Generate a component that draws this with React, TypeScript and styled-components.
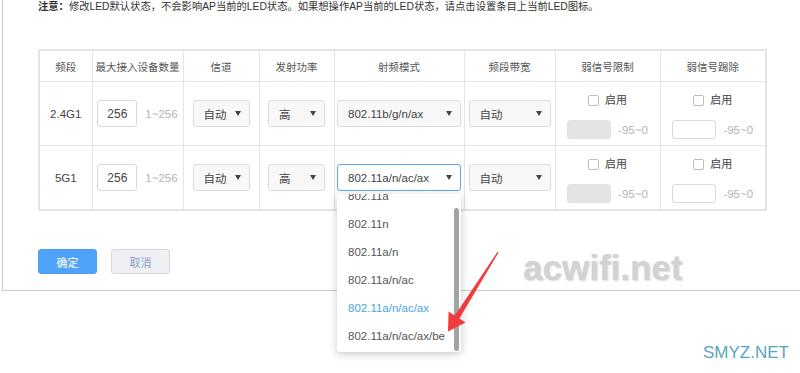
import React from 'react';
import styled, { createGlobalStyle } from 'styled-components';

const GlobalStyle = createGlobalStyle`
  html, body {
    margin: 0;
    padding: 0;
    background: #fff;
  }
  body {
    font-family: "Liberation Sans", "Noto Sans CJK SC", sans-serif;
    color: #444;
    overflow: hidden;
  }
`;

const Page = styled.div`
  position: relative;
  width: 800px;
  height: 373px;
  overflow: hidden;
`;

const Panel = styled.section`
  margin-left: 2px;
  border-left: 1px solid #c3cedb;
  border-bottom: 1px solid #c3cedb;
  padding: 0 0 16px 35px;
`;

const Notice = styled.p`
  margin: 0;
  font-size: 10.3px;
  line-height: 13px;
  color: #333;

  b {
    font-weight: 700;
  }
`;

const Grid = styled.table`
  margin-top: 36px;
  width: 727px;
  table-layout: fixed;
  border-collapse: collapse;
  border: 2px solid #e3e3e3;
`;

const HeadCell = styled.th`
  height: 30px;
  padding: 0;
  border: 1px solid #e3e3e3;
  font-size: 10.5px;
  font-weight: 400;
  color: #555;
  text-align: center;
  vertical-align: middle;
`;

const Cell = styled.td`
  height: 63px;
  padding: 0;
  border: 1px solid #e3e3e3;
  font-size: 11.5px;
  color: #444;
  text-align: center;
  vertical-align: middle;
`;

const Inline = styled.div<{ $gap: number }>`
  display: flex;
  align-items: center;
  justify-content: center;
  gap: ${(p) => p.$gap}px;
`;

const NumInput = styled.input`
  width: 40px;
  height: 27px;
  box-sizing: border-box;
  padding: 0;
  border: 1px solid #d9d9d9;
  border-radius: 3px;
  background: #fff;
  font: 12px "Liberation Sans", sans-serif;
  color: #444;
  text-align: center;
  outline: none;
`;

const Hint = styled.span`
  font-size: 11.5px;
  color: #b5b5b5;
`;

const SelectWrap = styled.div<{ $w: number }>`
  position: relative;
  width: ${(p) => p.$w}px;
  margin: 0 auto;
`;

const SelectBox = styled.div<{ $focus?: boolean }>`
  height: 27px;
  box-sizing: border-box;
  display: flex;
  align-items: center;
  justify-content: space-between;
  padding: 0 8px 0 10px;
  border: 1px solid ${(p) => (p.$focus ? '#5aa9ef' : '#dcdcdc')};
  border-radius: 3px;
  background: ${(p) => (p.$focus ? '#fff' : '#f8f8f8')};
  font-size: 11.5px;
  color: #444;
  text-align: left;
`;

const Caret = styled.span`
  width: 0;
  height: 0;
  border-left: 3.5px solid transparent;
  border-right: 3.5px solid transparent;
  border-top: 5px solid #444;
`;

const Menu = styled.div`
  position: absolute;
  top: calc(100% + 3px);
  left: 0;
  width: 100%;
  height: 158px;
  overflow: hidden;
  background: #fff;
  border-radius: 3px;
  box-shadow: 0 2px 8px rgba(0, 0, 0, 0.22);
  z-index: 5;
  text-align: left;
`;

const MenuList = styled.ul<{ $scroll: number }>`
  margin: 0;
  padding: 4px 0;
  list-style: none;
  transform: translateY(-${(p) => p.$scroll}px);
`;

const ScrollThumb = styled.div`
  position: absolute;
  right: 2px;
  top: 14px;
  bottom: 1px;
  width: 5px;
  border-radius: 3px;
  background: #a3a3a3;
`;

const MenuItem = styled.li<{ $active?: boolean }>`
  height: 28px;
  line-height: 28px;
  padding-left: 11px;
  font-size: 11.5px;
  color: ${(p) => (p.$active ? '#45a6e3' : '#555')};
  white-space: nowrap;
`;

const Stack = styled.div`
  display: flex;
  flex-direction: column;
  align-items: center;
  gap: 13px;
  margin-top: 5px;
`;

const CheckLine = styled.label`
  display: flex;
  align-items: center;
  gap: 6px;
  font-size: 11px;
  line-height: 14px;
  color: #444;
`;

const Box = styled.span`
  width: 11px;
  height: 11px;
  box-sizing: border-box;
  border: 1px solid #bdbdbd;
  border-radius: 2px;
  background: #fff;
`;

const SmallInput = styled.input<{ $off?: boolean }>`
  width: 44px;
  height: 19px;
  box-sizing: border-box;
  padding: 0;
  border: 1px solid ${(p) => (p.$off ? '#e2e2e2' : '#d9d9d9')};
  border-radius: 3px;
  background: ${(p) => (p.$off ? '#e4e4e4' : '#fff')};
  outline: none;
`;

const Actions = styled.div`
  display: flex;
  gap: 14px;
  margin-top: 38px;
`;

const Button = styled.button<{ $primary?: boolean }>`
  display: block;
  width: 59px;
  height: 25px;
  padding: 0;
  border-radius: 3px;
  border: 1px solid ${(p) => (p.$primary ? '#4a9ef5' : '#d9d9d9')};
  background: ${(p) => (p.$primary ? '#4fa2f7' : '#eff0f3')};
  color: ${(p) => (p.$primary ? '#fff' : '#8b9cc9')};
  font: 11px "Liberation Sans", "Noto Sans CJK SC", sans-serif;
`;

const Watermark = styled.div`
  position: absolute;
  left: 523px;
  top: 248px;
  font: 700 35px "Liberation Sans", sans-serif;
  color: #d2d2d2;
  text-shadow: 1px 1px 2px rgba(0, 0, 0, 0.16);
  pointer-events: none;
`;

const SiteMark = styled.div`
  position: absolute;
  left: 703px;
  top: 343px;
  font: 17px "Liberation Sans", sans-serif;
  color: #5aa5bd;
`;

const Arrow = styled.svg`
  position: absolute;
  left: 440px;
  top: 245px;
  z-index: 6;
`;

const headers = ['频段', '最大接入设备数量', '信道', '发射功率', '射频模式', '频段带宽', '弱信号限制', '弱信号踢除'];
const widths = [53, 91, 76, 75, 130, 91, 105, 106];
const modes5g = ['802.11a', '802.11n', '802.11a/n', '802.11a/n/ac', '802.11a/n/ac/ax', '802.11a/n/ac/ax/be'];

const rows = [
  { band: '2.4G1', mode: '802.11b/g/n/ax', open: false },
  { band: '5G1', mode: '802.11a/n/ac/ax', open: true },
];

const Select: React.FC<{ w: number; value: string; open?: boolean }> = ({ w, value, open }) => (
  <SelectWrap $w={w}>
    <SelectBox $focus={open}>
      <span>{value}</span>
      <Caret />
    </SelectBox>
    {open && (
      <Menu>
        <MenuList $scroll={16}>
          {modes5g.map((m) => (
            <MenuItem key={m} $active={m === value}>{m}</MenuItem>
          ))}
        </MenuList>
        <ScrollThumb />
      </Menu>
    )}
  </SelectWrap>
);

const WeakSignal: React.FC<{ off?: boolean }> = ({ off }) => (
  <Stack>
    <CheckLine>
      <Box />
      <span>启用</span>
    </CheckLine>
    <Inline $gap={7}>
      <SmallInput $off={off} disabled={off} />
      <Hint>-95~0</Hint>
    </Inline>
  </Stack>
);

export default function App() {
  return (
    <Page>
      <GlobalStyle />
      <Panel>
        <Notice>
          <b>注意：</b>修改LED默认状态，不会影响AP当前的LED状态。如果想操作AP当前的LED状态，请点击设置条目上当前LED图标。
        </Notice>
        <Grid>
          <colgroup>
            {widths.map((w, i) => (
              <col key={i} style={{ width: w }} />
            ))}
          </colgroup>
          <thead>
            <tr>
              {headers.map((h) => (
                <HeadCell key={h}>{h}</HeadCell>
              ))}
            </tr>
          </thead>
          <tbody>
            {rows.map((r) => (
              <tr key={r.band}>
                <Cell>{r.band}</Cell>
                <Cell>
                  <Inline $gap={8}>
                    <NumInput defaultValue="256" />
                    <Hint>1~256</Hint>
                  </Inline>
                </Cell>
                <Cell>
                  <Select w={57} value="自动" />
                </Cell>
                <Cell>
                  <Select w={57} value="高" />
                </Cell>
                <Cell>
                  <Select w={124} value={r.mode} open={r.open} />
                </Cell>
                <Cell>
                  <Select w={82} value="自动" />
                </Cell>
                <Cell>
                  <WeakSignal off />
                </Cell>
                <Cell>
                  <WeakSignal />
                </Cell>
              </tr>
            ))}
          </tbody>
        </Grid>
        <Actions>
          <Button $primary>确定</Button>
          <Button>取消</Button>
        </Actions>
      </Panel>
      <Watermark>acwifi.net</Watermark>
      <SiteMark>SMYZ.NET</SiteMark>
      <Arrow width="70" height="95" viewBox="0 0 70 95">
        <polygon
          points="57.6,6.7 58.6,7.4 19.4,73.4 25.5,77.5 8,86.5 8.6,66.6 14.8,70.6"
          fill="#f23b3b"
        />
      </Arrow>
    </Page>
  );
}
